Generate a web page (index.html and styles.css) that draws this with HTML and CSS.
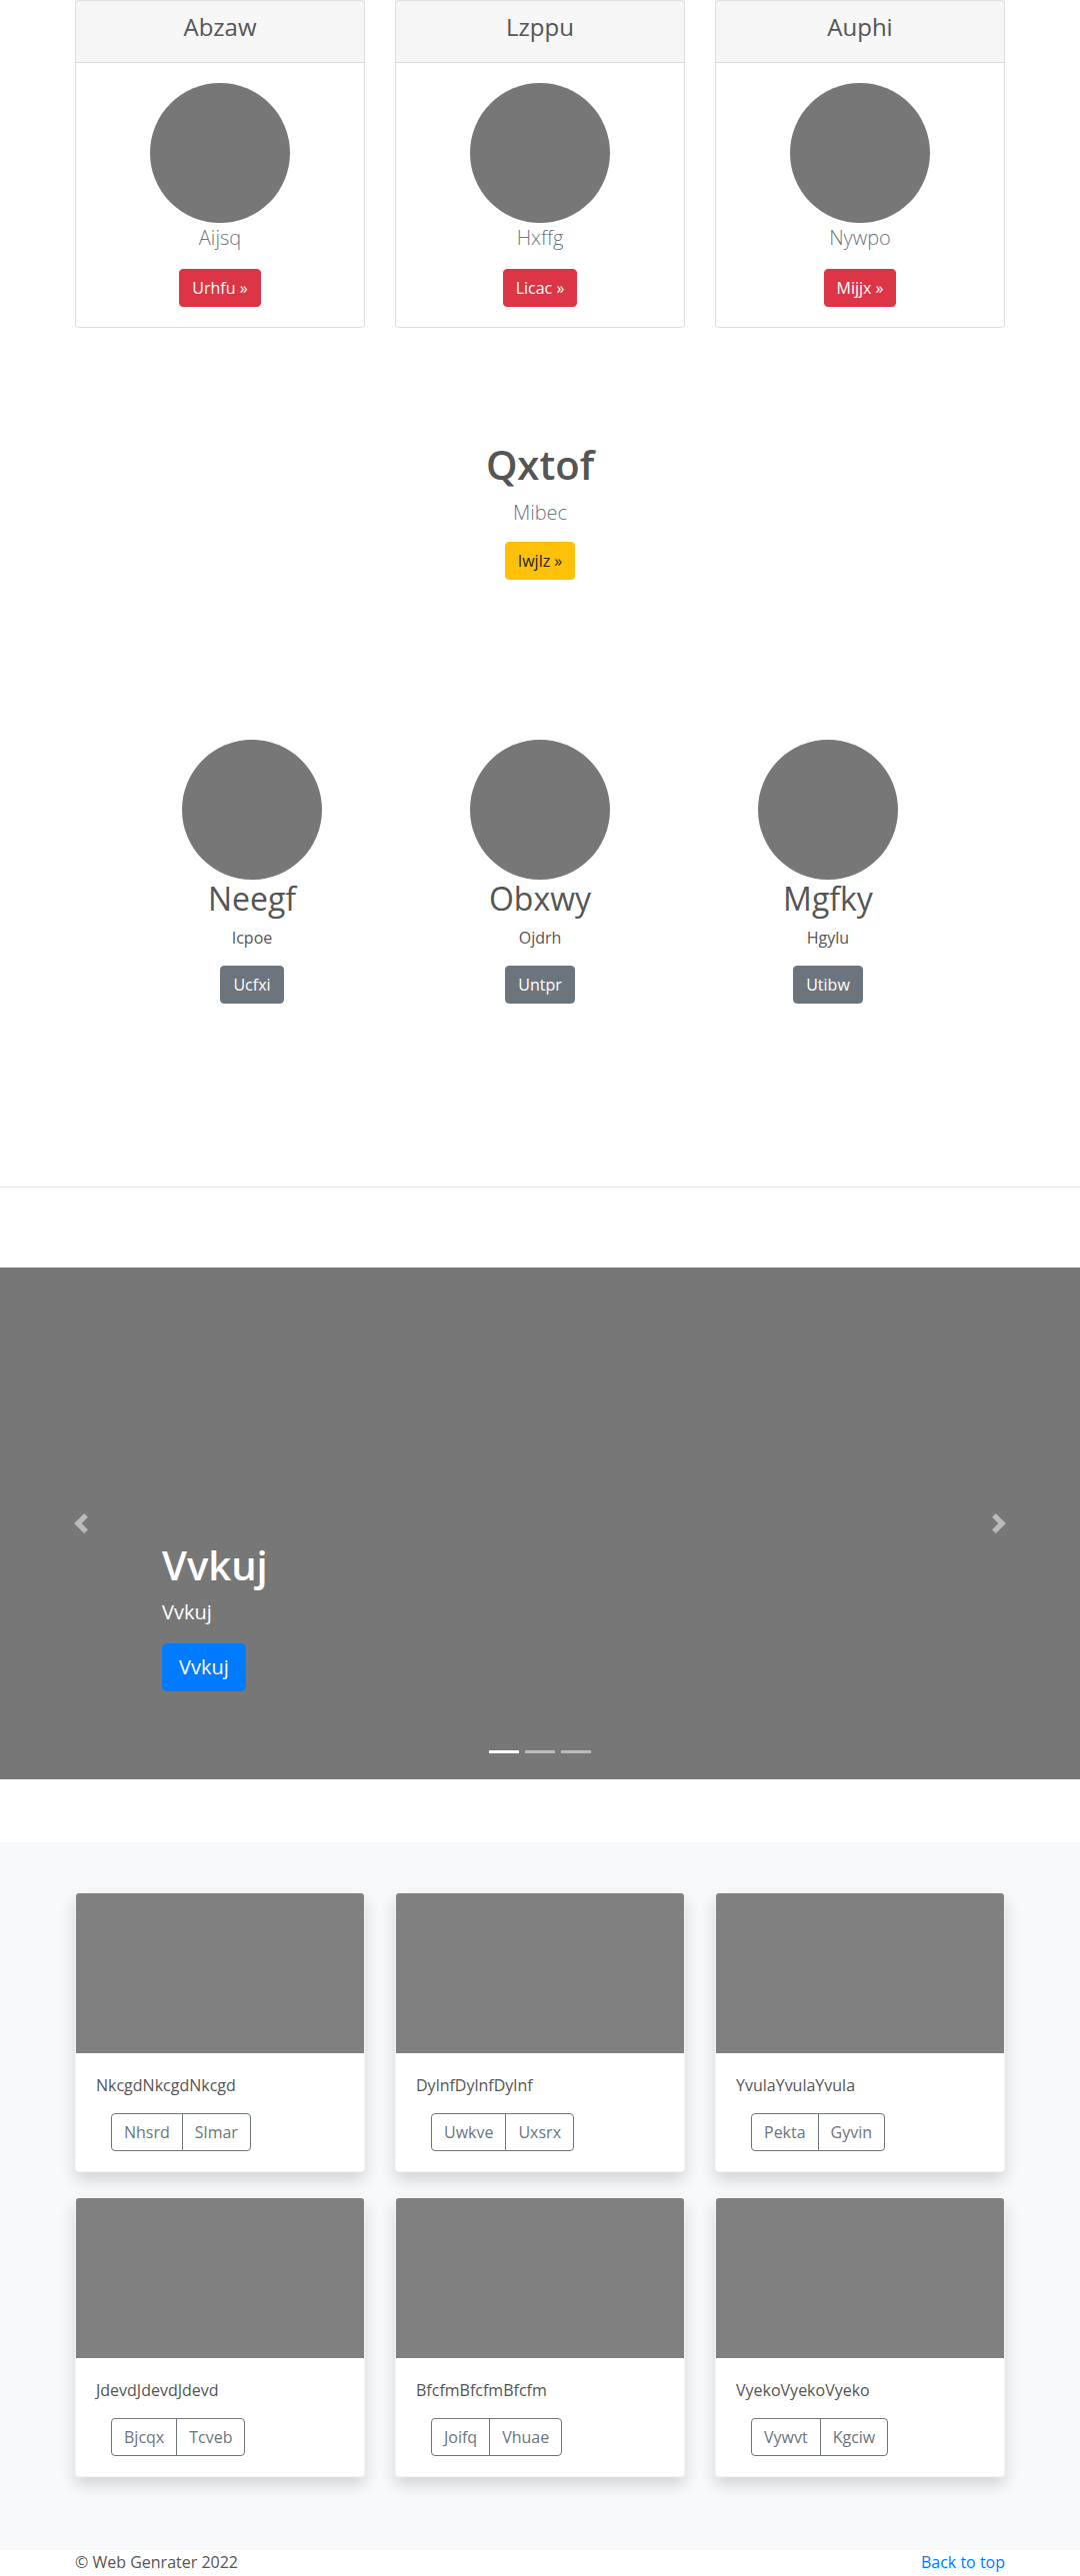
FILE: index.html
```html
<!DOCTYPE html>
<html lang="en">
<head>
<meta charset="utf-8">
<title>Page</title>
<link rel="stylesheet" href="styles.css">
</head>
<body>
<main>
  <section class="container pricing">
    <div class="deck">
      <div class="pcard">
        <div class="pcard-head"><h4>Abzaw</h4></div>
        <div class="pcard-body">
          <div class="avatar"></div>
          <p class="lead">Aijsq</p>
          <a class="btn btn-danger" href="#">Urhfu &raquo;</a>
        </div>
      </div>
      <div class="pcard">
        <div class="pcard-head"><h4>Lzppu</h4></div>
        <div class="pcard-body">
          <div class="avatar"></div>
          <p class="lead">Hxffg</p>
          <a class="btn btn-danger" href="#">Licac &raquo;</a>
        </div>
      </div>
      <div class="pcard">
        <div class="pcard-head"><h4>Auphi</h4></div>
        <div class="pcard-body">
          <div class="avatar"></div>
          <p class="lead">Nywpo</p>
          <a class="btn btn-danger" href="#">Mijjx &raquo;</a>
        </div>
      </div>
    </div>
  </section>

  <section class="hero">
    <h1>Qxtof</h1>
    <p class="lead">Mibec</p>
    <a class="btn btn-warning" href="#">Iwjlz &raquo;</a>
  </section>

  <section class="features">
    <div class="feature">
      <div class="avatar"></div>
      <h2>Neegf</h2>
      <p>Icpoe</p>
      <a class="btn btn-secondary" href="#">Ucfxi</a>
    </div>
    <div class="feature">
      <div class="avatar"></div>
      <h2>Obxwy</h2>
      <p>Ojdrh</p>
      <a class="btn btn-secondary" href="#">Untpr</a>
    </div>
    <div class="feature">
      <div class="avatar"></div>
      <h2>Mgfky</h2>
      <p>Hgylu</p>
      <a class="btn btn-secondary" href="#">Utibw</a>
    </div>
  </section>

  <hr class="divider">

  <section class="carousel">
    <div class="caption">
      <h1>Vvkuj</h1>
      <p class="cap-text">Vvkuj</p>
      <div class="cap-actions"><a class="btn btn-lg btn-primary" href="#">Vvkuj</a></div>
    </div>
    <a class="ctrl ctrl-prev" href="#" aria-label="Previous">
      <svg width="20" height="20" viewBox="0 0 8 8" fill="#fff"><path d="M5.25 0l-4 4 4 4 1.5-1.5L4.25 4l2.5-2.5L5.25 0z"/></svg>
    </a>
    <a class="ctrl ctrl-next" href="#" aria-label="Next">
      <svg width="20" height="20" viewBox="0 0 8 8" fill="#fff"><path d="M2.75 0l-1.5 1.5L3.75 4l-2.5 2.5L2.75 8l4-4-4-4z"/></svg>
    </a>
    <ol class="indicators">
      <li class="active"></li>
      <li></li>
      <li></li>
    </ol>
  </section>

  <section class="album">
    <div class="container album-grid">
      <div class="acard">
        <div class="acard-img"></div>
        <div class="acard-body">
          <p>NkcgdNkcgdNkcgd</p>
          <div class="btn-group"><a class="btn btn-outline" href="#">Nhsrd</a><a class="btn btn-outline" href="#">Slmar</a></div>
        </div>
      </div>
      <div class="acard">
        <div class="acard-img"></div>
        <div class="acard-body">
          <p>DylnfDylnfDylnf</p>
          <div class="btn-group"><a class="btn btn-outline" href="#">Uwkve</a><a class="btn btn-outline" href="#">Uxsrx</a></div>
        </div>
      </div>
      <div class="acard">
        <div class="acard-img"></div>
        <div class="acard-body">
          <p>YvulaYvulaYvula</p>
          <div class="btn-group"><a class="btn btn-outline" href="#">Pekta</a><a class="btn btn-outline" href="#">Gyvin</a></div>
        </div>
      </div>
      <div class="acard">
        <div class="acard-img"></div>
        <div class="acard-body">
          <p>JdevdJdevdJdevd</p>
          <div class="btn-group"><a class="btn btn-outline" href="#">Bjcqx</a><a class="btn btn-outline" href="#">Tcveb</a></div>
        </div>
      </div>
      <div class="acard">
        <div class="acard-img"></div>
        <div class="acard-body">
          <p>BfcfmBfcfmBfcfm</p>
          <div class="btn-group"><a class="btn btn-outline" href="#">Joifq</a><a class="btn btn-outline" href="#">Vhuae</a></div>
        </div>
      </div>
      <div class="acard">
        <div class="acard-img"></div>
        <div class="acard-body">
          <p>VyekoVyekoVyeko</p>
          <div class="btn-group"><a class="btn btn-outline" href="#">Vywvt</a><a class="btn btn-outline" href="#">Kgciw</a></div>
        </div>
      </div>
    </div>
  </section>
</main>
<footer class="container footer">
  <p>&copy; Web Genrater 2022</p>
  <a class="top-link" href="#">Back to top</a>
</footer>
</body>
</html>
```

FILE: styles.css
```css
* { box-sizing: border-box; }

html, body { margin: 0; padding: 0; }

body {
  font-family: "Open Sans", "Noto Sans", "Liberation Sans", sans-serif;
  font-size: 16px;
  line-height: 1.5;
  color: #555;
  background: #fff;
  overflow: hidden;
}

h1, h2, h4, p { margin: 0; }

.container {
  width: 930px;
  margin: 0 auto;
}

/* buttons */
.btn {
  display: inline-block;
  padding: 6px 12px;
  font-size: 16px;
  line-height: 24px;
  border: 1px solid transparent;
  border-radius: 4px;
  text-decoration: none;
  text-align: center;
  font-weight: 400;
}
.btn-lg { padding: 8px 16px; font-size: 20px; line-height: 30px; border-radius: 5px; }
.btn-danger { background: #dc3545; border-color: #dc3545; color: #fff; }
.btn-warning { background: #ffc107; border-color: #ffc107; color: #212529; }
.btn-secondary { background: #6c757d; border-color: #6c757d; color: #fff; }
.btn-primary { background: #007bff; border-color: #007bff; color: #fff; }
.btn-outline { background: transparent; border-color: #6c757d; color: #6c757d; }

.lead { font-size: 20px; line-height: 30px; font-weight: 300; color: #6c757d; }

.avatar {
  width: 140px;
  height: 140px;
  border-radius: 50%;
  background: #777;
  margin: 0 auto;
}

/* pricing cards */
.deck {
  display: grid;
  grid-template-columns: repeat(3, 1fr);
  gap: 30px;
}
.pcard {
  border: 1px solid rgba(0,0,0,.125);
  border-radius: 4px;
  text-align: center;
  background: #fff;
}
.pcard-head {
  background: rgba(0,0,0,.03);
  border-bottom: 1px solid rgba(0,0,0,.125);
  padding: 12px 20px;
}
.pcard-head h4 {
  font-size: 24px;
  line-height: 1.2;
  font-weight: 400;
  margin-bottom: 8px;
  color: #555;
}
.pcard-body { padding: 20px; }
.pcard-body .lead { margin-bottom: 16px; }

/* hero */
.hero {
  text-align: center;
  padding-top: 113px;
}
.hero h1 {
  font-size: 40px;
  line-height: 48px;
  font-weight: 600;
  margin-bottom: 9px;
}
.hero .lead { margin-bottom: 14px; }

/* features */
.features {
  display: grid;
  grid-template-columns: repeat(3, 288px);
  justify-content: center;
  margin-top: 160px;
  text-align: center;
}
.feature h2 {
  font-size: 32px;
  line-height: 1.2;
  font-weight: 400;
  margin-bottom: 8px;
}
.feature p { margin-bottom: 16px; }

.divider {
  border: 0;
  border-top: 1px solid rgba(0,0,0,.1);
  margin: 183px 0 80px;
  height: 0;
}

/* carousel */
.carousel {
  position: relative;
  height: 512px;
  background: #777;
  display: flex;
  align-items: flex-end;
  padding: 0 15% 68px;
  color: #fff;
}
.caption { width: 100%; }
.caption h1 {
  font-size: 40px;
  line-height: 48px;
  font-weight: 600;
  margin-bottom: 8px;
}
.cap-text { font-size: 20px; line-height: 30px; margin-bottom: 16px; }
.cap-actions { display: flex; margin-bottom: 20px; }

.ctrl {
  position: absolute;
  top: 0;
  bottom: 0;
  width: 15%;
  display: flex;
  align-items: center;
  justify-content: center;
  opacity: .5;
}
.ctrl-prev { left: 0; }
.ctrl-next { right: 0; }

.indicators {
  position: absolute;
  left: 15%;
  right: 15%;
  bottom: 16px;
  margin: 0;
  padding: 0;
  list-style: none;
  display: flex;
  justify-content: center;
}
.indicators li {
  width: 30px;
  height: 23px;
  margin: 0 3px;
  border-top: 10px solid transparent;
  border-bottom: 10px solid transparent;
  background: #fff;
  background-clip: padding-box;
  opacity: .5;
}
.indicators li.active { opacity: 1; }

/* album */
.album {
  background: #f8f9fa;
  margin-top: 63px;
  padding: 50px 0 73px;
}
.album-grid {
  display: grid;
  grid-template-columns: repeat(3, 1fr);
  column-gap: 30px;
  row-gap: 25px;
}
.acard {
  background: #fff;
  border: 1px solid rgba(0,0,0,.03);
  border-radius: 4px;
  box-shadow: 0 8px 16px rgba(0,0,0,.15);
  overflow: hidden;
}
.acard-img { height: 160px; background: #808080; }
.acard-body { padding: 20px; }
.acard-body p { margin-bottom: 16px; }
.btn-group { display: inline-flex; margin-left: 15px; }
.btn-group .btn:first-child { border-top-right-radius: 0; border-bottom-right-radius: 0; }
.btn-group .btn + .btn { margin-left: -1px; border-top-left-radius: 0; border-bottom-left-radius: 0; }

/* footer */
.footer {
  display: flex;
  justify-content: space-between;
  height: 24px;
}
.top-link { color: #007bff; text-decoration: none; }
```
